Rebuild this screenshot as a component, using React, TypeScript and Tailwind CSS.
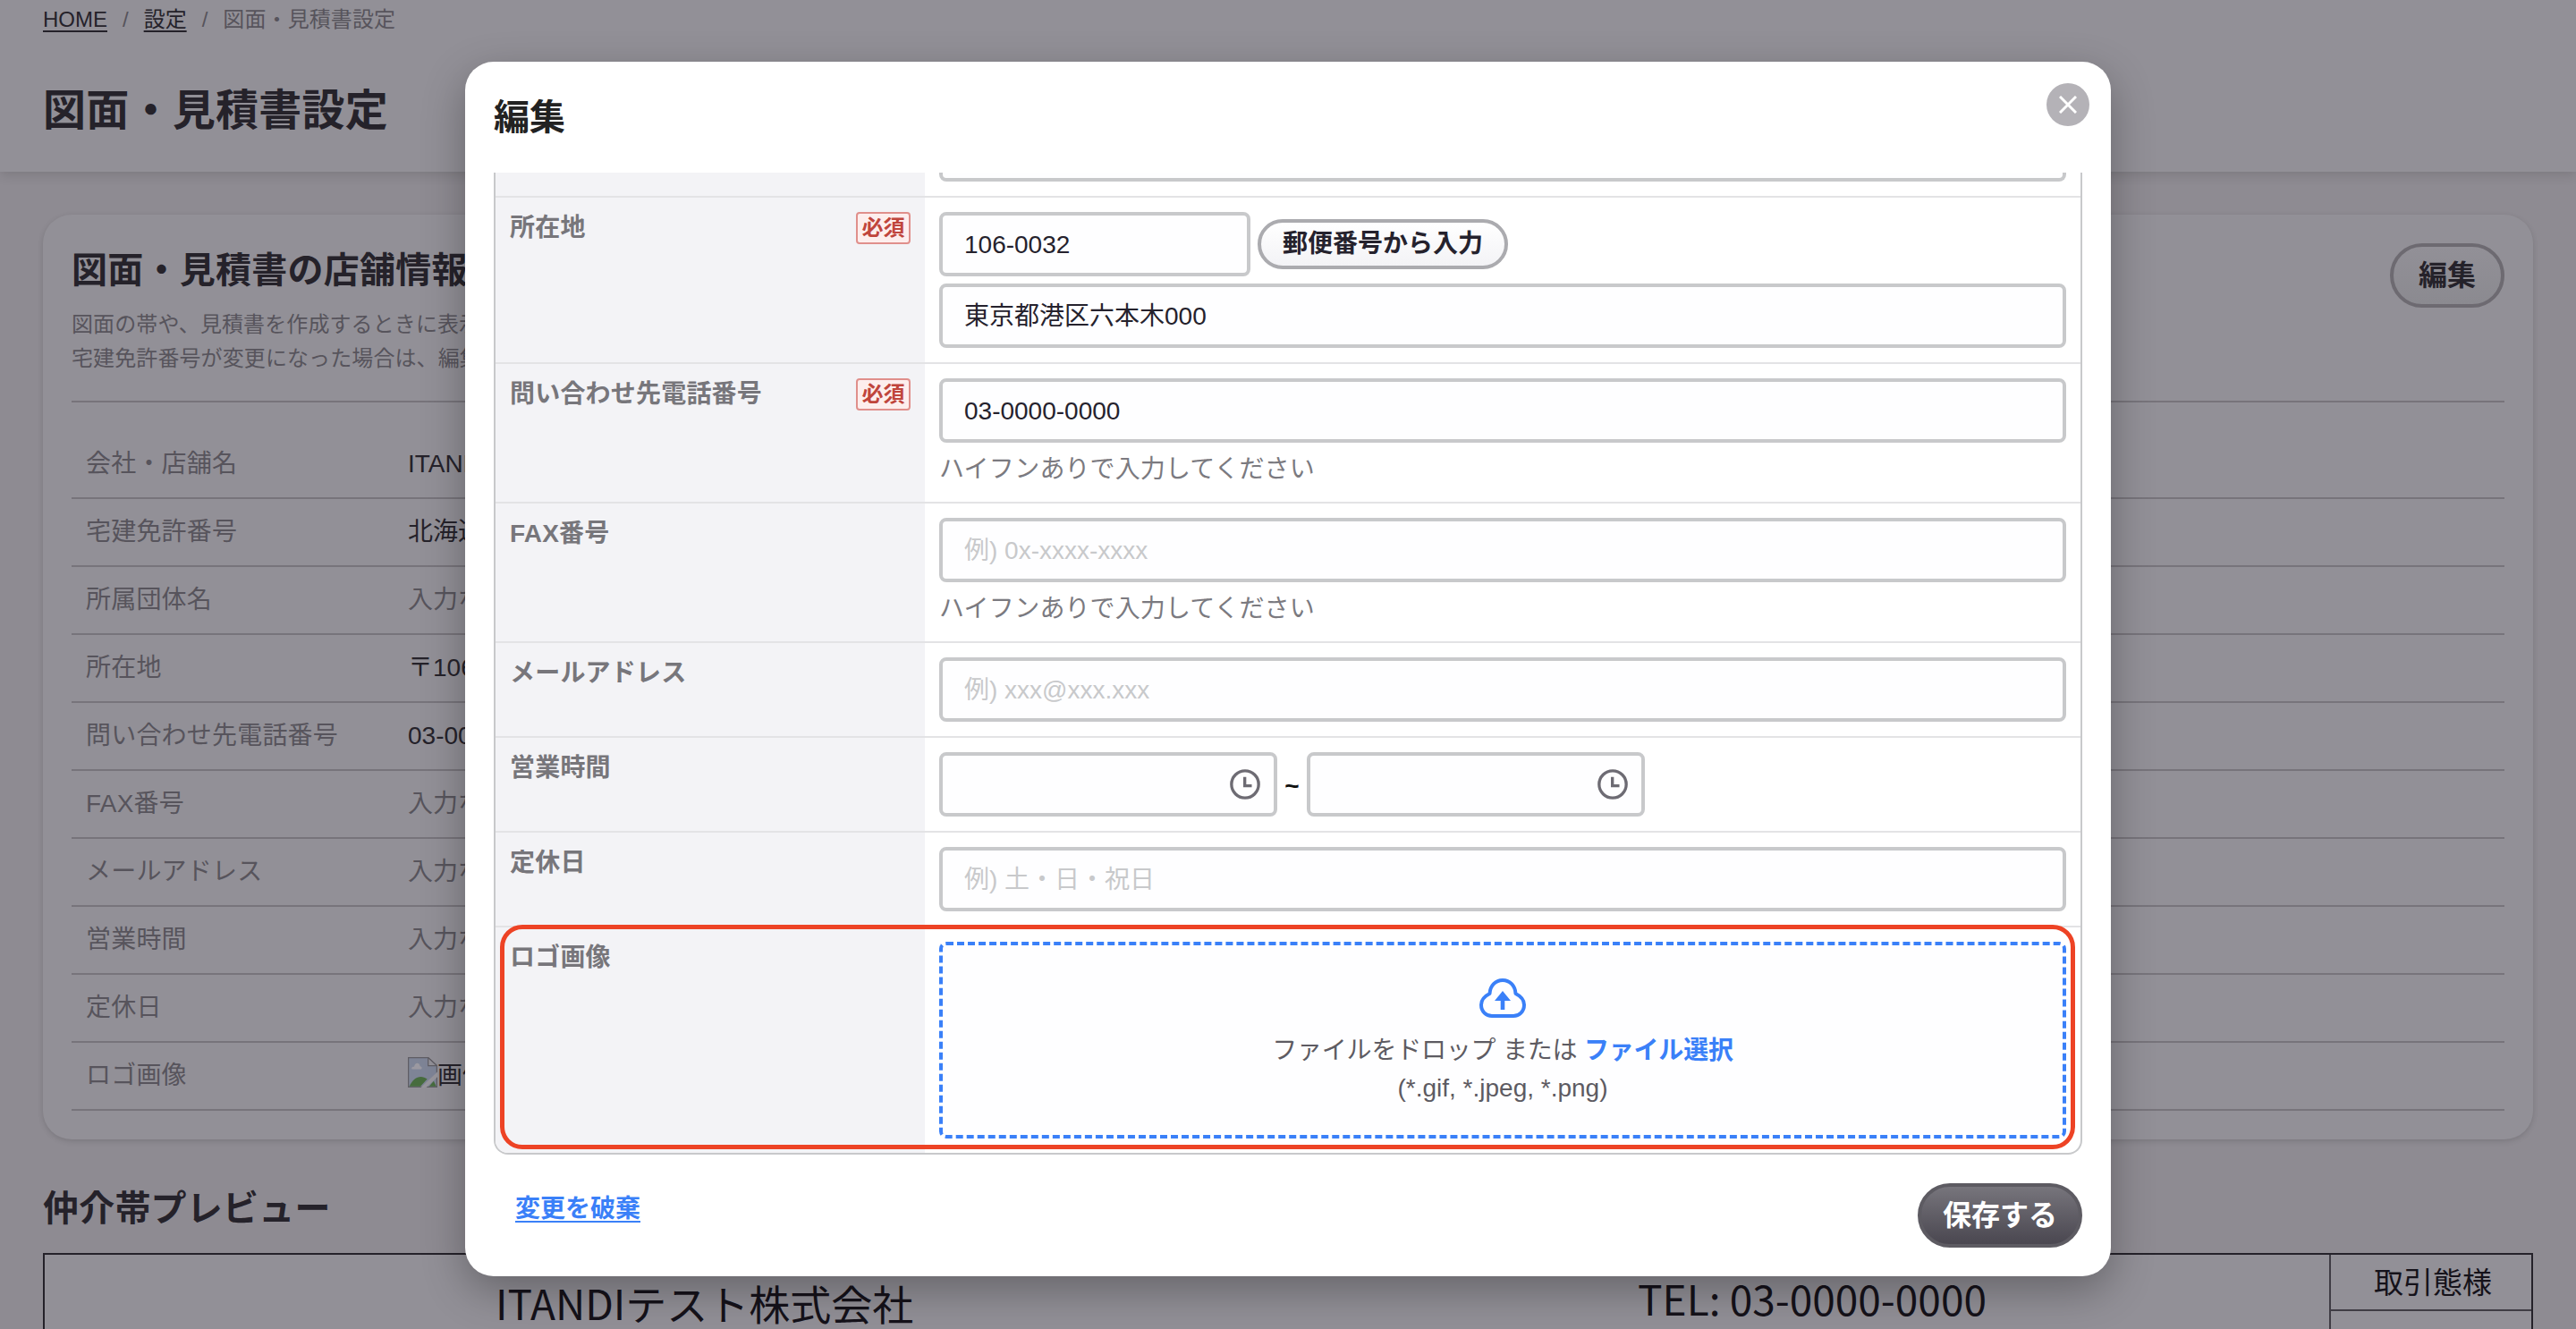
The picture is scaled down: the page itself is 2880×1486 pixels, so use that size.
import React from 'react';
import type { ReactNode } from 'react';

const storeInfo = [
  { label: '会社・店舗名', value: 'ITANDIテスト株式会社' },
  { label: '宅建免許番号', value: '北海道知事' },
  { label: '所属団体名' },
  { label: '所在地', value: '〒106-0032' },
  { label: '問い合わせ先電話番号', value: '03-0000-0000' },
  { label: 'FAX番号' },
  { label: 'メールアドレス' },
  { label: '営業時間' },
  { label: '定休日' },
];

const BrokenImage = () => (
  <svg className="mb-2 h-[34px] w-[33px] shrink-0" viewBox="0 0 16 16" preserveAspectRatio="none">
    <path d="M0.3 0.3H11L15.7 4.5V15.7H0.3Z" fill="#7e8496" stroke="#5f5d64" strokeWidth="0.6" />
    <path d="M11 0.3V4.5H15.7Z" fill="#929097" stroke="#5f5d64" strokeWidth="0.6" />
    <path d="M2 6.2C2 5 3 5 3.4 5C3.8 2.6 6.3 2.6 6.6 4.8C7.8 4.8 7.9 6.4 7 6.4H2.6Z" fill="#9b99a1" />
    <path d="M0.8 15.4C3 10.5 7 9 10.5 11.5L6.8 15.4Z" fill="#476c3e" />
    <path d="M11.5 15.4L14 12.6L15.4 15.4Z" fill="#476c3e" />
    <path d="M7 16L16 7.8V10.5L10 16Z" fill="#97959c" />
  </svg>
);

const ClockIcon = () => (
  <svg className="h-10 w-10" viewBox="0 0 24 24" fill="none" stroke="#6d6b73" strokeWidth="2">
    <circle cx="12" cy="12" r="9.1" />
    <path d="M11.8 7V13H16.5" />
  </svg>
);

const UploadIcon = () => (
  <svg className="h-[44px] w-[52px]" viewBox="0 0 52 44" fill="none">
    <path
      d="M11.5 17C12 8 18 2 26 2C34 2 40 8 40.5 17C46.5 20 50 24 50 29.5C50 37 44.5 42 38 42H14C7.5 42 2 37 2 29.5C2 24 5.5 20 11.5 17Z"
      stroke="#3a80f8"
      strokeWidth="4"
      strokeLinejoin="round"
    />
    <path d="M26 35V22" stroke="#3a80f8" strokeWidth="4.6" />
    <path d="M26 14L35 25H17Z" fill="#3a80f8" />
  </svg>
);

const TextField = ({ value, placeholder, className = 'w-full' }: { value?: string; placeholder?: string; className?: string }) => (
  <div className={`flex h-[72px] items-center rounded-lg border-4 border-[#c8c9cb] bg-[#fefeff] px-6 pt-0.5 ${className}`}>
    {value ? <span className="text-[#25222d]">{value}</span> : <span className="text-[#c8c9cb]">{placeholder}</span>}
  </div>
);

const TimeField = () => (
  <div className="flex h-[72px] w-[378px] items-center justify-end rounded-lg border-4 border-[#c8c9cb] bg-[#fefeff] pr-3">
    <ClockIcon />
  </div>
);

const Helper = () => <p className="mt-[9px] leading-[41px] tracking-[0.1px] text-[#7b7a80]">ハイフンありで入力してください</p>;

const FormRow = ({ label, required, last, children }: { label: string; required?: boolean; last?: boolean; children: ReactNode }) => (
  <div className={`flex ${last ? '' : 'border-b-2 border-[#e3e3e5]'}`}>
    <div className="flex w-[480px] shrink-0 items-start justify-between bg-[#f3f3f6] p-4">
      <span className="leading-9 font-bold tracking-[0.2px] text-[#77767b]">{label}</span>
      {required && (
        <span className="flex h-9 w-[61px] items-center justify-center rounded border-2 border-[#e08f8b] bg-[#fdeeed] text-[24px] leading-none font-bold text-[#c0453c]">
          必須
        </span>
      )}
    </div>
    <div className="grow p-4">{children}</div>
  </div>
);

const App = () => {
  return (
    <div className="relative h-[1486px] w-[2880px] overflow-hidden bg-[#8e8b92] font-['Liberation_Sans','Noto_Sans_CJK_JP',sans-serif] text-[28px] text-[#25222a]">
      <header className="h-[192px] bg-[#929097] px-12 shadow-[0_4px_12px_rgba(0,0,0,0.12)]">
        <nav className="flex h-11 items-center gap-[17px] text-[24px] text-[#57545c]">
          <a className="text-[#25222a] underline underline-offset-4">HOME</a>
          <span>/</span>
          <a className="text-[#25222a] underline underline-offset-4">設定</a>
          <span>/</span>
          <span className="tracking-[0.1px]">図面・見積書設定</span>
        </nav>
        <h1 className="mt-[45px] text-[48px] leading-[70px] font-bold tracking-[0.25px]">図面・見積書設定</h1>
      </header>

      <main className="px-12 pt-12">
        <section className="rounded-[32px] bg-[#929097] px-8 pt-8 pb-8 shadow-[0_2px_6px_rgba(0,0,0,0.14)]">
          <div className="flex h-[178px] justify-between border-b-2 border-[#77747b]">
            <div>
              <h2 className="text-[40px] leading-[60px] font-bold tracking-[0.25px]">図面・見積書の店舗情報</h2>
              <p className="mt-3 text-[24px] leading-[38px] tracking-[0.1px] text-[#57545c]">
                図面の帯や、見積書を作成するときに表示されます。
                <br />
                宅建免許番号が変更になった場合は、編集してください。
              </p>
            </div>
            <button className="h-[72px] w-32 rounded-full border-4 border-[#6d6a71] bg-linear-to-b from-[#929097] to-[#8b8a90] text-[32px] leading-none font-bold">
              編集
            </button>
          </div>
          <dl className="pt-8">
            {storeInfo.map((item) => (
              <div key={item.label} className="flex h-[76px] items-center border-b-2 border-[#77747b] px-4">
                <dt className="w-[360px] tracking-[0.2px] text-[#57545c]">{item.label}</dt>
                <dd className={item.value ? '' : 'text-[#57545c]'}>{item.value || '入力なし'}</dd>
              </div>
            ))}
            <div className="flex h-[76px] items-center border-b-2 border-[#77747b] px-4">
              <dt className="w-[360px] tracking-[0.2px] text-[#57545c]">ロゴ画像</dt>
              <dd className="flex items-center">
                <BrokenImage />
                画像
              </dd>
            </div>
          </dl>
        </section>

        <h2 className="mt-[47px] text-[40px] leading-[60px] font-bold tracking-[0.2px]">仲介帯プレビュー</h2>
        <div className="mt-5 flex h-[200px] border-2 border-[#25222a] bg-[#929097] font-['Noto_Sans_CJK_JP',sans-serif] text-[46px] text-[#15121a]">
          <div className="flex grow pt-[19px] pl-[504px] leading-[68px]">
            <span className="w-[1277px]">ITANDIテスト株式会社</span>
            <span className="-mt-[5px]">TEL: 03-0000-0000</span>
          </div>
          <div className="w-[226px] border-l-2 border-[#3f3c44] pl-1 text-center text-[33px]">
            <p className="-ml-1 h-[63px] border-b-2 border-[#3f3c44] pl-1 leading-[59px]">取引態様</p>
          </div>
        </div>
      </main>

      {/* Modal de edição */}
      <div className="absolute top-[69px] left-[520px] flex h-[1358px] w-[1840px] flex-col rounded-[32px] bg-white px-8 shadow-[0_16px_48px_rgba(0,0,0,0.3)]">
        <div className="flex h-[124px] shrink-0 items-start justify-between">
          <h2 className="pt-8 text-[40px] leading-[60px] font-bold text-[#222]">編集</h2>
          <button className="mt-6 -mr-2 flex h-12 w-12 items-center justify-center rounded-full bg-[#b4b2b7]">
            <svg className="h-5 w-5" viewBox="0 0 20 20" stroke="#fff" strokeWidth="3">
              <path d="M1 1L19 19M19 1L1 19" />
            </svg>
          </button>
        </div>

        <div className="relative h-[1098px] shrink-0 overflow-hidden rounded-b-2xl border-x-2 border-b-2 border-[#c8c9cb]">
          <div className="flex h-7 border-b-2 border-[#e3e3e5]">
            <div className="w-[480px] bg-[#f3f3f6]" />
            <div className="grow px-4">
              <div className="h-2.5 rounded-b-lg border-x-4 border-b-4 border-[#c8c9cb] bg-[#fefeff]" />
            </div>
          </div>
          <FormRow label="所在地" required>
            <div className="flex items-center gap-2">
              <TextField value="106-0032" className="w-[348px]" />
              <button className="h-14 w-[280px] rounded-full border-4 border-[#ababaf] bg-linear-to-b from-white to-[#f3f3f6] leading-none font-bold text-[#25222d]">
                郵便番号から入力
              </button>
            </div>
            <TextField value="東京都港区六本木000" className="mt-2 w-full" />
          </FormRow>
          <FormRow label="問い合わせ先電話番号" required>
            <TextField value="03-0000-0000" />
            <Helper />
          </FormRow>
          <FormRow label="FAX番号">
            <TextField placeholder="例) 0x-xxxx-xxxx" />
            <Helper />
          </FormRow>
          <FormRow label="メールアドレス">
            <TextField placeholder="例) xxx@xxx.xxx" />
          </FormRow>
          <FormRow label="営業時間">
            <div className="flex items-center">
              <TimeField />
              <span className="w-[33px] pt-1 text-center font-bold text-[#111]">~</span>
              <TimeField />
            </div>
          </FormRow>
          <FormRow label="定休日">
            <TextField placeholder="例) 土・日・祝日" />
          </FormRow>
          <FormRow label="ロゴ画像" last>
            <div className="flex h-[220px] flex-col items-center rounded-lg border-4 border-dashed border-[#3a80f8] bg-[#fefeff] pt-[37px] text-[#5d5b62]">
              <UploadIcon />
              <p className="mt-3.5 leading-[45px] tracking-[-0.2px]">
                ファイルをドロップ または <span className="font-bold text-[#3a80f8]">ファイル選択</span>
              </p>
              <p className="-mt-[3px] leading-[45px]">(*.gif, *.jpeg, *.png)</p>
            </div>
          </FormRow>
          <div className="absolute top-[841px] left-[4.5px] h-[251px] w-[1761px] rounded-[25px] border-[5px] border-[#ed4325]" />
        </div>

        <div className="flex grow items-start justify-between pt-8">
          <a className="ml-6 leading-[58px] font-bold text-[#3a80f8] underline underline-offset-4">変更を破棄</a>
          <button className="h-[72px] w-[184px] rounded-full border-4 border-[#5d5b62] bg-linear-to-b from-[#77757c] to-[#4a4750] text-[32px] leading-none font-bold text-white">
            保存する
          </button>
        </div>
      </div>
    </div>
  );
};

export default App;
